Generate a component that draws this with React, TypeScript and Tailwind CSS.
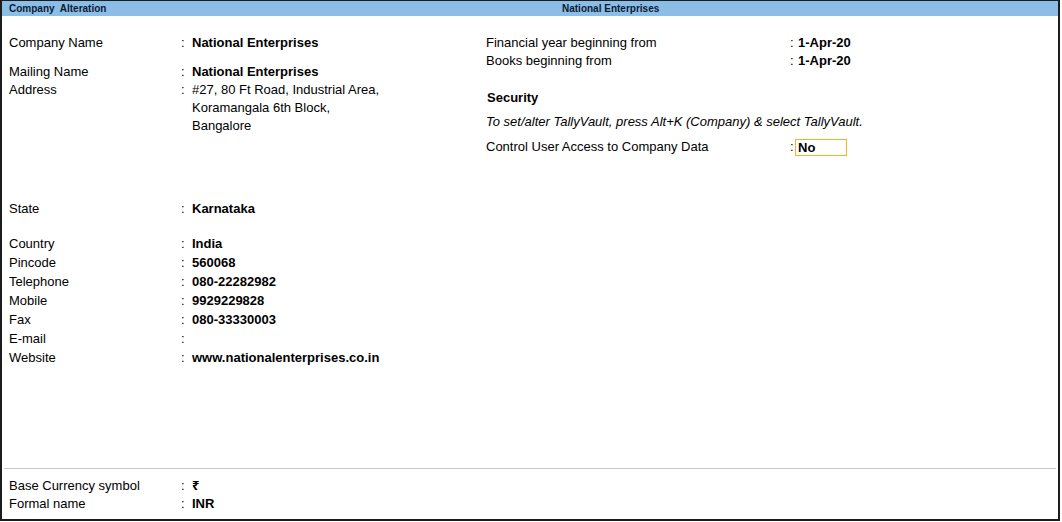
import React from "react";

const font = { fontFamily: '"Liberation Sans", Arial, "Noto Sans", sans-serif' };

function LRow({ label, value, bold = true, h = "h-[18px] leading-[18px]" }: { label: string; value?: string; bold?: boolean; h?: string }) {
  return (
    <div className={`flex ${h}`}>
      <div className="w-[172px] shrink-0">{label}</div>
      <div className="w-[11px] shrink-0">:</div>
      <div className={bold ? "font-bold" : ""}>{value}</div>
    </div>
  );
}

export default function App() {
  return (
    <div className="w-[1062px] h-[522px] bg-white" style={font}>
      <div className="w-[1060px] h-[521px] border-t border-l-2 border-r-2 border-b-2 border-[#1c1c1c] flex flex-col text-[13px] text-black">
        {/* Title bar */}
        <div className="h-[15px] bg-[#8cbde6] flex items-center text-[10px] font-bold text-[#0b1a33] whitespace-pre leading-[15px]">
          <div className="w-[560px] pl-[7px]">Company  Alteration</div>
          <div>National Enterprises</div>
        </div>

        {/* Main */}
        <div className="flex-1 flex">
          {/* Left column */}
          <div className="w-[484px] pl-[7px] pt-[18px]">
            <LRow label="Company Name" value="National Enterprises" />
            <div className="mt-[11px]">
              <LRow label="Mailing Name" value="National Enterprises" />
              <div className="flex leading-[18px]">
                <div className="w-[172px] shrink-0">Address</div>
                <div className="w-[11px] shrink-0">:</div>
                <div>
                  <div>#27, 80 Ft Road, Industrial Area,</div>
                  <div>Koramangala 6th Block,</div>
                  <div>Bangalore</div>
                </div>
              </div>
            </div>
            <div className="mt-[65px]">
              <LRow label="State" value="Karnataka" />
            </div>
            <div className="mt-[16px]">
              <LRow label="Country" value="India" h="h-[19px] leading-[19px]" />
              <LRow label="Pincode" value="560068" h="h-[19px] leading-[19px]" />
              <LRow label="Telephone" value="080-22282982" h="h-[19px] leading-[19px]" />
              <LRow label="Mobile" value="9929229828" h="h-[19px] leading-[19px]" />
              <LRow label="Fax" value="080-33330003" h="h-[19px] leading-[19px]" />
              <LRow label="E-mail" value="" h="h-[19px] leading-[19px]" />
              <LRow label="Website" value="www.nationalenterprises.co.in" h="h-[19px] leading-[19px]" />
            </div>
          </div>

          {/* Right column */}
          <div className="flex-1 pt-[18px]">
            <div className="flex h-[18px] leading-[18px]">
              <div className="w-[304px] shrink-0">Financial year beginning from</div>
              <div className="w-[8px] shrink-0">:</div>
              <div className="font-bold">1-Apr-20</div>
            </div>
            <div className="flex h-[18px] leading-[18px]">
              <div className="w-[304px] shrink-0">Books beginning from</div>
              <div className="w-[8px] shrink-0">:</div>
              <div className="font-bold">1-Apr-20</div>
            </div>
            <div className="mt-[19px] h-[18px] leading-[18px] font-bold pl-[1px]">Security</div>
            <div className="mt-[6px] h-[18px] leading-[18px] italic">
              To set/alter TallyVault, press Alt+K (Company) &amp; select TallyVault.
            </div>
            <div className="mt-[7px] flex h-[18px] leading-[18px] items-center">
              <div className="w-[304px] shrink-0">Control User Access to Company Data</div>
              <div className="w-[5px] shrink-0">:</div>
              <div className="w-[52px] h-[17px] border border-[#f0b429] font-bold pl-[2px] leading-[15px]">No</div>
            </div>
          </div>
        </div>

        {/* Footer */}
        <div className="mx-[2px] border-t border-[#c8c8c8] pl-[5px] pt-[8px] pb-[6px]">
          <LRow label="Base Currency symbol" value="₹" />
          <LRow label="Formal name" value="INR" />
        </div>
      </div>
    </div>
  );
}
